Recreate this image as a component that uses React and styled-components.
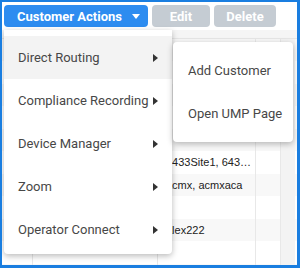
import styled, { createGlobalStyle } from 'styled-components';

const GlobalStyle = createGlobalStyle`
  body {
    margin: 0;
    font-family: Roboto, "Liberation Sans", sans-serif;
  }
`;

const Frame = styled.div`
  position: relative;
  box-sizing: border-box;
  width: 300px;
  height: 268px;
  border-style: solid;
  border-color: #1a7ee0;
  border-width: 2px 3px 3px 2px;
  background: #fff;
  overflow: hidden;
  display: flex;
  flex-direction: column;
`;

const Toolbar = styled.div`
  display: flex;
  gap: 4px;
  padding: 3px 0 0 2px;
  height: 25px;
  box-sizing: border-box;
`;

const Button = styled.button`
  height: 22px;
  width: ${(p) => p.$w}px;
  border: none;
  border-radius: 4px;
  background: ${(p) => (p.$primary ? '#2d8cf0' : '#c5ccd3')};
  color: #fff;
  font-family: Roboto, "Liberation Sans", sans-serif;
  font-size: 13px;
  font-weight: 700;
  display: flex;
  align-items: center;
  justify-content: ${(p) => (p.$primary ? 'flex-start' : 'center')};
  padding: ${(p) => (p.$primary ? '0 0 0 13px' : '0')};
  gap: 10px;
`;

const Caret = styled.span`
  width: 0;
  height: 0;
  border-left: 4.5px solid transparent;
  border-right: 4.5px solid transparent;
  border-top: 5px solid #fff;
`;

const Table = styled.div`
  flex: 1;
  margin-top: 3px;
  display: flex;
  flex-direction: column;
`;

const HeaderRow = styled.div`
  height: 7.5px;
  background: #f5f5f5;
  border-bottom: 1px solid #e6e6e6;
`;

const Row = styled.div`
  display: grid;
  grid-template-columns: 31px 125px 98px 25px 14px;
  height: 22.5px;
  background: ${(p) => (p.$alt ? '#f8f8f8' : '#fff')};
`;

const Cell = styled.div`
  border-right: 1px solid ${(p) => (p.$last ? 'transparent' : '#e8e8e8')};
  background: ${(p) => (p.$track ? '#f3f3f3' : 'transparent')};
  font-family: "Liberation Sans", Arial, sans-serif;
  font-size: 11px;
  color: #222;
  line-height: 22.5px;
  padding: 0 1px 0 8px;
  white-space: nowrap;
  overflow: hidden;
  text-overflow: ellipsis;
`;

const Menu = styled.div`
  position: absolute;
  left: 2px;
  top: 28px;
  width: 168px;
  padding: 6px 0 3px;
  background: #fff;
  border-radius: 0 0 4px 4px;
  box-shadow: 0 2px 6px rgba(0, 0, 0, 0.28);
`;

const MenuItem = styled.div`
  height: 43px;
  display: flex;
  align-items: center;
  justify-content: space-between;
  padding: 0 14px;
  font-size: 13px;
  color: #474747;
  background: ${(p) => (p.$active ? '#f3f3f3' : 'transparent')};
`;

const Arrow = styled.span`
  width: 0;
  height: 0;
  border-top: 4px solid transparent;
  border-bottom: 4px solid transparent;
  border-left: 5px solid #333;
`;

const SubMenu = styled.div`
  position: absolute;
  left: 171px;
  top: 40px;
  width: 120px;
  padding: 7px 0;
  background: #fff;
  border-radius: 4px;
  box-shadow: 0 2px 6px rgba(0, 0, 0, 0.28);
`;

const SubItem = styled.div`
  height: 43px;
  display: flex;
  align-items: center;
  padding-left: 15px;
  font-size: 13px;
  color: #474747;
`;

const rows = [
  '', '', '', '', '',
  '6433Site1, 6433Site2',
  'acmx, acmxaca',
  '',
  'alex222',
  '',
  '',
];

const menuItems = [
  'Direct Routing',
  'Compliance Recording',
  'Device Manager',
  'Zoom',
  'Operator Connect',
];

export default function App() {
  return (
    <>
      <GlobalStyle />
      <Frame>
        <Toolbar>
          <Button $primary $w={144}>
            Customer Actions
            <Caret />
          </Button>
          <Button $w={58}>Edit</Button>
          <Button $w={62}>Delete</Button>
        </Toolbar>
        <Table>
          <HeaderRow />
          {rows.map((text, i) => (
            <Row key={i} $alt={i % 2 === 0}>
              <Cell />
              <Cell />
              <Cell>{text}</Cell>
              <Cell />
              <Cell $track $last />
            </Row>
          ))}
        </Table>
        <Menu>
          {menuItems.map((label, i) => (
            <MenuItem key={label} $active={i === 0}>
              {label}
              <Arrow />
            </MenuItem>
          ))}
        </Menu>
        <SubMenu>
          <SubItem>Add Customer</SubItem>
          <SubItem>Open UMP Page</SubItem>
        </SubMenu>
      </Frame>
    </>
  );
}
